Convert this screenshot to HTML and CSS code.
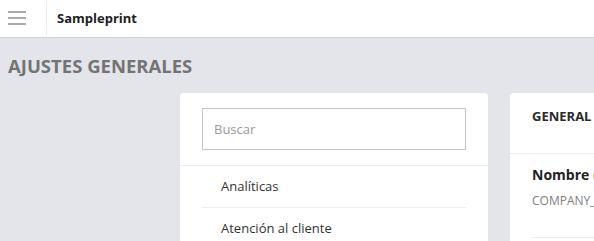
FILE: index.html
```html
<!DOCTYPE html>
<html lang="es">
<head>
<meta charset="utf-8">
<link rel="stylesheet" href="styles.css">
</head>
<body>
<header class="topbar">
  <button class="menu-btn" aria-label="Menú">
    <svg width="18" height="14" viewBox="0 0 18 14"><path d="M0 1h18M0 7h18M0 13h18" stroke="#8e8e8e" stroke-width="1.6"/></svg>
  </button>
  <div class="brand">Sampleprint</div>
</header>
<main class="page">
  <h1 class="page-title">AJUSTES GENERALES</h1>
  <div class="content">
    <aside class="card nav-card">
      <div class="search-wrap">
        <input class="search" type="text" placeholder="Buscar">
      </div>
      <ul class="nav-list">
        <li class="nav-item">Analíticas</li>
        <li class="nav-item">Atención al cliente</li>
      </ul>
    </aside>
    <section class="card main-card">
      <div class="card-head">GENERAL</div>
      <div class="field">
        <div class="field-title">Nombre de la empresa</div>
        <div class="field-key">COMPANY_NAME</div>
      </div>
    </section>
  </div>
</main>
</body>
</html>
```
FILE: styles.css
```css
* { box-sizing: border-box; }
html, body { margin: 0; padding: 0; }
body {
  font-family: "Open Sans", "Liberation Sans", sans-serif;
  background: #e4e5ea;
  overflow: hidden;
  width: 594px;
  height: 241px;
}
.topbar {
  height: 38px;
  background: #fff;
  display: flex;
  align-items: stretch;
  border-bottom: 1px solid #d3d3d6;
}
.menu-btn {
  width: 47px;
  border: 0;
  background: none;
  padding: 0 0 0 8px;
  display: flex;
  align-items: center;
  justify-content: flex-start;
  border-right: 1px solid #ececec;
  margin-bottom: 2px;
}
.menu-btn svg { display: block; }
.brand {
  padding-left: 10px;
  font-weight: 700;
  font-size: 13px;
  color: #222;
  display: flex;
  align-items: center;
  padding-bottom: 1px;
}
.page { padding: 0 8px; }
.page-title {
  margin: 0;
  padding-top: 14px;
  font-size: 18.5px;
  line-height: 28px;
  font-weight: 700;
  color: #747474;
}
.content {
  display: flex;
  gap: 22px;
  padding-left: 172px;
  margin-top: 13px;
}
.card {
  background: #fff;
  border-radius: 4px;
  height: 200px;
}
.nav-card { width: 308px; flex: none; }
.search-wrap {
  padding: 15px 22px;
  border-bottom: 1px solid #ececec;
}
.search {
  display: block;
  width: 100%;
  height: 42px;
  border: 1px solid #c4c4c4;
  padding: 0 11px;
  font-family: inherit;
  font-size: 13px;
  color: #333;
  outline: none;
}
.search::placeholder { color: #9a9a9a; }
.nav-list {
  list-style: none;
  margin: 0;
  padding: 0 22px;
}
.nav-item {
  height: 42px;
  line-height: 41px;
  padding-left: 19px;
  font-size: 13px;
  color: #333;
  border-bottom: 1px solid #ececec;
}
.main-card { flex: 1 0 auto; min-width: 0; overflow: hidden; border-radius: 4px 0 0 4px; }
.card-head {
  height: 61px;
  padding: 14px 22px 0;
  line-height: 18px;
  font-size: 13px;
  font-weight: 700;
  color: #2a2a2a;
  border-bottom: 1px solid #ececec;
  white-space: nowrap;
}
.field {
  margin-left: 22px;
  padding-top: 11px;
  height: 84px;
  border-bottom: 1px solid #ececec;
  white-space: nowrap;
  overflow: hidden;
}
.field-title {
  font-size: 14px;
  font-weight: 700;
  color: #222;
  line-height: 20px;
}
.field-key {
  margin-top: 8px;
  font-size: 12px;
  color: #808080;
  line-height: 16px;
}
```
